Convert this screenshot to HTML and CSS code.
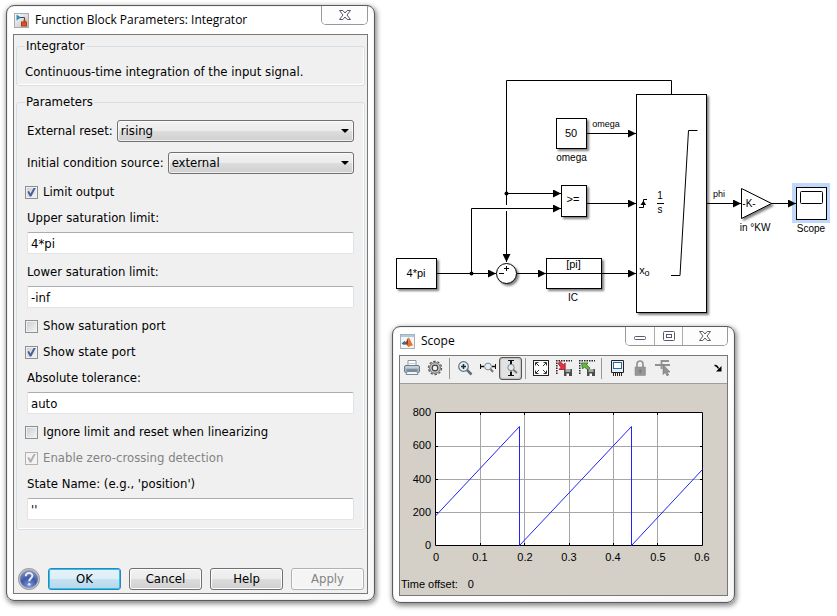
FILE: index.html
```html
<!DOCTYPE html>
<html lang="en">
<head>
<meta charset="utf-8">
<title>Integrator model</title>
<link rel="stylesheet" href="styles.css">
</head>
<body>
<main class="workspace">
  <section class="window dialog">
    <header class="titlebar">
      <svg class="app-icon" viewBox="0 0 15 15"><defs><linearGradient id="ib" x1="0" y1="0" x2="1" y2="1"><stop offset="0" stop-color="#fff"/><stop offset="1" stop-color="#b9bcc0"/></linearGradient></defs><rect x=".5" y=".5" width="14" height="14" fill="url(#ib)" stroke="#a9abae"/><path d="M2.500 1.500v6l4.500-3z" fill="#2f8fb8"/><path d="M6 4.500h4.500v4.500" fill="none" stroke="#444"/><path d="M10.500 6.500v3" stroke="#d0401c" stroke-width="2"/><rect x="7.500" y="9" width="5" height="4" fill="#d4552b" stroke="#b23a17"/></svg>
      <h1 class="title">Function Block Parameters: Integrator</h1>
      <div class="caption-buttons">
        <button type="button" class="caption close" aria-label="Close"><svg viewBox="0 0 12 10" width="12" height="10"><path d="M.5 .5h3.300L6 3l2.200-2.500h3.300L8 5l3.500 4.500H8.200L6 7 3.800 9.500H.5L4 5z" fill="#fff" stroke="#555a68"/></svg></button>
      </div>
    </header>
    <form class="client form">
      <fieldset class="group">
        <legend>Integrator</legend>
        <p class="text">Continuous-time integration of the input signal.</p>
      </fieldset>
      <fieldset class="group params">
        <legend>Parameters</legend>
        <div class="row">
          <label for="reset">External reset:</label>
          <span class="combo"><select id="reset"><option>rising</option></select></span>
        </div>
        <div class="row">
          <label for="source">Initial condition source:</label>
          <span class="combo"><select id="source"><option>external</option></select></span>
        </div>
        <label class="check"><input type="checkbox" checked>Limit output</label>
        <div class="field"><label for="upper">Upper saturation limit:</label><input class="edit" id="upper" type="text" value="4*pi"></div>
        <div class="field"><label for="lower">Lower saturation limit:</label><input class="edit" id="lower" type="text" value="-inf"></div>
        <label class="check"><input type="checkbox">Show saturation port</label>
        <label class="check"><input type="checkbox" checked>Show state port</label>
        <div class="field"><label for="tol">Absolute tolerance:</label><input class="edit" id="tol" type="text" value="auto"></div>
        <label class="check"><input type="checkbox">Ignore limit and reset when linearizing</label>
        <label class="check off"><input type="checkbox" checked disabled>Enable zero-crossing detection</label>
        <div class="field"><label for="state">State Name: (e.g., 'position')</label><input class="edit" id="state" type="text" value="''"></div>
      </fieldset>
      <footer class="actions">
        <svg class="help" viewBox="0 0 22 22"><defs><radialGradient id="hb" cx=".5" cy=".85" r=".8"><stop offset="0" stop-color="#7f9be0"/><stop offset=".5" stop-color="#4059a8"/><stop offset="1" stop-color="#8b9ac6"/></radialGradient></defs><circle cx="11" cy="11" r="10" fill="url(#hb)" stroke="#c4c4c4" stroke-width="2"/><circle cx="11" cy="11" r="10.500" fill="none" stroke="#8d8d8d" stroke-width=".7"/><path d="M7.800 8.300c0-4.300 6.600-4.200 6.600-.5 0 2.400-3.200 2.600-3.200 5.500" fill="none" stroke="#e6eaf6" stroke-width="2"/><circle cx="11.200" cy="16.300" r="1.300" fill="#e6eaf6"/></svg>
        <button type="button" class="btn default">OK</button>
        <button type="button" class="btn">Cancel</button>
        <button type="button" class="btn">Help</button>
        <button type="button" class="btn" disabled>Apply</button>
      </footer>
    </form>
  </section>

  <div class="side">
    <svg class="diagram" viewBox="392 5 445 321" role="img" aria-label="Block diagram">
      <defs>
        <filter id="sh" x="-20%" y="-20%" width="150%" height="150%"><feDropShadow dx="2" dy="2" stdDeviation="1.200" flood-opacity=".5"/></filter>
        <marker id="ar" viewBox="0 0 8 8" refX="8" refY="4" markerWidth="8" markerHeight="8" markerUnits="userSpaceOnUse" orient="auto"><path d="M0 0L8 4 0 8z"/></marker>
      </defs>
      <g class="wire">
        <path d="M671.500 95V80.500H506.500V205M506.500 211V262" marker-end="url(#ar)"/>
        <path d="M506.500 193.500H561" marker-end="url(#ar)"/>
        <path d="M437 273.500H496" marker-end="url(#ar)"/>
        <path d="M471.500 273.500V208.500H561" marker-end="url(#ar)"/>
        <path d="M517 273.500H546" marker-end="url(#ar)"/>
        <path d="M602 273.500H636" marker-end="url(#ar)"/>
        <path d="M587 203.500H636" marker-end="url(#ar)"/>
        <path d="M587 133.500H636" marker-end="url(#ar)"/>
        <path d="M707 203.500H741" marker-end="url(#ar)"/>
      </g>
      <circle cx="506.500" cy="193.500" r="2"/><circle cx="471.500" cy="273.500" r="2"/>
      <rect x="792" y="183" width="38" height="40" fill="#c0d9fb"/>
      <g class="block">
        <rect x="556.500" y="118.500" width="30" height="30"/>
        <rect x="561.500" y="185.500" width="25" height="31"/>
        <rect x="396.500" y="258.500" width="40" height="30"/>
        <rect x="546.500" y="258.500" width="55" height="30"/>
        <circle cx="506.500" cy="273.500" r="10"/>
        <rect x="636.500" y="94.500" width="70" height="218"/>
        <path d="M741.500 188.500V218.500L771.500 203.500z"/>
        <rect x="796.500" y="187.500" width="30" height="32" class="flat"/>
      </g>
      <path d="M771 203.500h25" class="line" marker-end="url(#ar)"/>
      <rect x="800.500" y="191.500" width="22" height="12" rx="1" class="line"/>
      <path class="line" d="M546.500 273.500h55M499 273.500h5M504 268.500h5M506.500 266v5M671 275.500h9L688.500 130.500h9M657 203.500h7M639 207.500h4.500v-8h3.500"/>
      <path d="M640.500 205l3-4.500 2.500 4.500z"/>
      <g class="inside">
        <text x="571" y="137">50</text><text x="573" y="203">&gt;=</text><text x="416" y="277">4*pi</text><text x="573.500" y="268">[pi]</text><text x="642" y="274">x</text>
      </g>
      <g class="name">
        <text x="660" y="199">1</text><text x="660" y="213">s</text><text x="749" y="207">-K-</text>
        <text x="571.500" y="161">omega</text><text x="573" y="301">IC</text><text x="755" y="231">in °KW</text><text x="811" y="232">Scope</text>
      </g>
      <g class="signal"><text x="606" y="127">omega</text><text x="719" y="197">phi</text><text x="647" y="276">o</text></g>
    </svg>

    <section class="window scope">
      <header class="titlebar">
        <svg class="app-icon" viewBox="0 0 15 15"><rect x=".5" y=".5" width="14" height="14" fill="#f5f5f5" stroke="#a8b0b8"/><path d="M1 1h13v2H1z" fill="#a9cbe4"/><path d="M1.500 9.500L4.500 7l2 1.500L4 11z" fill="#2d70a6"/><path d="M4 11c2-1 3-6.500 4.500-7.500L8 12c-1-1.500-2-2-4-1z" fill="#8d3a20"/><path d="M8.500 3.500C10 4 11 9 13.500 11.500c-3-.5-3.500 1-5.500 1.500-1-2 .5-6 .5-9.500z" fill="#e8742a"/></svg>
        <h2 class="title">Scope</h2>
        <div class="caption-buttons">
          <button type="button" class="caption" aria-label="Minimize"><svg viewBox="0 0 12 10" width="12" height="10"><rect x=".5" y="5.500" width="11" height="3" rx="1" fill="#fff" stroke="#555a68"/></svg></button>
          <button type="button" class="caption" aria-label="Maximize"><svg viewBox="0 0 12 10" width="12" height="10"><rect x=".5" y=".5" width="11" height="9" rx="1" fill="#fff" stroke="#555a68"/><rect x="3.500" y="3.500" width="5" height="3" fill="#fff" stroke="#555a68"/></svg></button>
          <button type="button" class="caption close" aria-label="Close"><svg viewBox="0 0 12 10" width="12" height="10"><path d="M.5 .5h3.300L6 3l2.200-2.500h3.300L8 5l3.500 4.500H8.200L6 7 3.800 9.500H.5L4 5z" fill="#fff" stroke="#555a68"/></svg></button>
        </div>
      </header>
      <div class="client">
        <div class="toolbar">
          <button type="button" class="tool" aria-label="Print"><svg viewBox="0 0 16 16"><path d="M4 .5h8V6H4z" fill="#fff" stroke="#8a949c"/><path d="M5 3.500h6" stroke="#ccd"/><rect x=".5" y="5.500" width="15" height="7" rx="1.500" fill="#a9b9c6" stroke="#6a7c8a"/><path d="M1.500 7h13" stroke="#dce5ec"/><path d="M2.500 10h11" stroke="#52616d"/><path d="M3 11.500h10l1 3H2z" fill="#eef5fb" stroke="#7b8a96"/></svg></button>
          <button type="button" class="tool" aria-label="Parameters"><svg viewBox="0 0 16 16"><circle cx="8" cy="8" r="6.600" fill="none" stroke="#555" stroke-width="1.200" stroke-dasharray="2.500 1.650"/><circle cx="8" cy="8" r="5.400" fill="#c9c9c9" stroke="#666"/><circle cx="8" cy="8" r="2.800" fill="#f0f0f0" stroke="#444" stroke-width="1.200"/></svg></button>
          <span class="sep"></span>
          <button type="button" class="tool" aria-label="Zoom"><svg viewBox="0 0 16 16"><path d="M10 10l4.500 4.500" stroke="#666b73" stroke-width="2.500"/><circle cx="6.500" cy="6.500" r="4.800" fill="#e6f1f8" stroke="#66717a" stroke-width="1.200"/><path d="M4 6.500h5M6.500 4v5" stroke="#172d3c" stroke-width="1.500"/></svg></button>
          <button type="button" class="tool" aria-label="Zoom X-axis"><svg viewBox="0 0 16 16"><path d="M.5 4v5M15.500 4v5" stroke="#111"/><path d="M1 6.500h3M12 6.500h3" stroke="#111" stroke-width="1.500"/><path d="M10 8.500l3 3.500" stroke="#777" stroke-width="2"/><circle cx="8" cy="6.500" r="3.400" fill="#e2edf4" stroke="#7d8890"/></svg></button>
          <button type="button" class="tool pressed" aria-label="Zoom Y-axis"><svg viewBox="0 0 16 16"><path d="M5 .5h6M5 15.500h6" stroke="#111"/><path d="M8 1v3.500M8 11.500V15" stroke="#111" stroke-width="2"/><path d="M10 9.500l4 3.500" stroke="#777" stroke-width="2"/><circle cx="8" cy="7.500" r="3.200" fill="#dce9f1" stroke="#7d8890"/></svg></button>
          <span class="sep"></span>
          <button type="button" class="tool" aria-label="Autoscale"><svg viewBox="0 0 16 16"><rect x=".5" y=".5" width="15" height="15" fill="#fff" stroke="#222"/><path d="M2.500 5.500v-3h3M10.500 2.500h3v3M13.500 10.500v3h-3M5.500 13.500h-3v-3M3 3l3 3M13 3l-3 3M13 13l-3-3M3 13l3-3" fill="none" stroke="#333"/></svg></button>
          <button type="button" class="tool" aria-label="Save axes settings"><svg viewBox="0 0 16 16"><path d="M0 .8h16M.8 0v15" stroke="#222" stroke-width="1.500" stroke-dasharray="1.500 1"/><path d="M2 3.500l2-2 3.500 3.300L9.200 3v6.500H3l1.900-2.100z" fill="#e43344" stroke="#a01422" stroke-width=".8"/><path d="M8 9h8v7H8z" fill="#4c4c4c"/><path d="M9.500 9h5v3h-5z" fill="#a8a8a8"/><path d="M10.500 13.500h2.500V16h-2.500z" fill="#fff"/></svg></button>
          <button type="button" class="tool" aria-label="Restore axes settings"><svg viewBox="0 0 16 16"><path d="M0 .8h16M.8 0v15" stroke="#222" stroke-width="1.500" stroke-dasharray="1.500 1"/><path d="M2.500 3H9L7.500 4.700l3.500 3.300-2 2L5.300 7 3.500 9z" fill="#66b843" stroke="#2c681a" stroke-width=".8"/><path d="M8 9h8v7H8z" fill="#4c4c4c"/><path d="M9.500 9h5v3h-5z" fill="#a8a8a8"/><path d="M10.500 13.500h2.500V16h-2.500z" fill="#fff"/></svg></button>
          <span class="sep"></span>
          <button type="button" class="tool" aria-label="Floating scope"><svg viewBox="0 0 16 16"><path d="M2.500 .5h12v12h-12z" fill="#eee" stroke="#222"/><rect x="4.500" y="2.500" width="8" height="6" fill="#fff" stroke="#1672b5"/><path d="M4.500 13v3M6.500 13v3M8.500 13v3M10.500 13v3M12.500 13v3" stroke="#222"/></svg></button>
          <button type="button" class="tool" aria-label="Lock axes selection" disabled><svg viewBox="0 0 16 16"><path d="M5 8V4c0-4 6-4 6 0v4" fill="none" stroke="#949494" stroke-width="1.700"/><rect x="3" y="7" width="10.500" height="8.500" fill="#969696" stroke="#858585" stroke-width=".5"/><path d="M8.200 9.500v4M6.700 11h3" stroke="#777"/></svg></button>
          <button type="button" class="tool" aria-label="Signal selection" disabled><svg viewBox="0 0 16 16"><path d="M0 5h6M7 1h7M7 5h8M6.500 0v9" fill="none" stroke="#929292" stroke-width="1.800"/><path d="M8 4.500v10l2.300-2 1.700 3.500 1.700-1-1.500-3H15z" fill="#939393" stroke="#777" stroke-width=".6"/></svg></button>
          <svg class="dock" viewBox="0 0 8 8"><path d="M.5 1.500c2-.5 3 1 4 3" fill="none" stroke="#000" stroke-width="1.500"/><path d="M7.500 2v5.500H2z"/></svg>
        </div>
        <div class="plot">
          <svg class="chart" viewBox="400 384 327 180" role="img" aria-label="Sawtooth signal between 0 and 720">
            <rect x="435.500" y="412.500" width="267" height="133" class="area"/>
            <path class="grid" d="M480.500 412v134M524.500 412v134M569.500 412v134M613.500 412v134M657.500 412v134M435 446.500h267M435 479.500h267M435 512.500h267"/>
            <path class="axis" d="M435.500 412.500h267v133h-267zM480.500 413v2M524.500 413v2M569.500 413v2M613.500 413v2M657.500 413v2M480.500 545v-2M524.500 545v-2M569.500 545v-2M613.500 545v-2M657.500 545v-2M436 446.500h2M436 479.500h2M436 512.500h2M702 446.500h-2M702 479.500h-2M702 512.500h-2"/>
            <path class="trace" d="M435.500 516L519.500 426.500V545.500L631.500 426.500V545.500L702.500 469.500"/>
            <g class="ylab"><text x="431" y="416">800</text><text x="431" y="449">600</text><text x="431" y="483">400</text><text x="431" y="516">200</text><text x="431" y="549">0</text></g>
            <g class="xlab"><text x="436" y="561">0</text><text x="480" y="561">0.1</text><text x="525" y="561">0.2</text><text x="569" y="561">0.3</text><text x="613" y="561">0.4</text><text x="658" y="561">0.5</text><text x="702" y="561">0.6</text></g>
          </svg>
          <p class="offset"><span>Time offset:</span><span>0</span></p>
        </div>
      </div>
    </section>
  </div>
</main>
</body>
</html>
```
FILE: styles.css
```css
* { box-sizing: border-box; }
body {
  margin: 0;
  min-height: 100vh;
  background: #fff;
  color: #000;
  font: 13px/16px "DejaVu Sans Condensed", "DejaVu Sans", sans-serif;
}
h1, h2, p { margin: 0; }
button, input, select { font: inherit; color: inherit; }

.workspace {
  display: grid;
  grid-template-columns: minmax(0, 369fr) minmax(0, 445fr);
  column-gap: 17px;
  align-items: start;
  padding: 5px 0 12px 6px;
}

.window {
  border: 1px solid #5c5c5c;
  border-radius: 8px;
  background: linear-gradient(135deg, #fff 60%, #f7f7f7);
  box-shadow: inset 0 0 1px #777, 1px 2px 5px 1px rgba(0, 0, 0, .45);
  padding: 0 6px 6px;
}
.titlebar {
  display: flex;
  align-items: center;
  height: 28px;
  padding-left: 1px;
}
.app-icon { width: 15px; height: 15px; }
.title {
  flex: 1;
  margin-left: 6px;
  font: 12px/16px "Open Sans", "Noto Sans", sans-serif;
}
.caption-buttons {
  display: flex;
  align-self: flex-start;
  border: 1px solid #999;
  border-top: 0;
  border-radius: 0 0 5px 5px;
  overflow: hidden;
}
.caption {
  display: grid;
  place-items: center;
  width: 28px;
  height: 18px;
  padding: 0;
  border: 0;
  background: #fdfdfd;
}
.caption + .caption { border-left: 1px solid #aaa; }
.caption.close { width: 45px; }

.client { border: 1px solid #777; }
.form { padding: 3px 2px; background: #f0f0f0; }

.group {
  min-width: 0;
  margin: 0;
  padding: 10px 10px 5px 8px;
  border: 1px solid #d5dfe5;
  border-radius: 3px;
  box-shadow: inset -1px -1px #fff;
}
.group legend { padding: 0 1px; }
.params {
  display: flex;
  flex-direction: column;
  gap: 10px;
  margin-top: 8px;
  padding-bottom: 9px;
}
.row { display: flex; align-items: center; gap: 4px; padding-left: 2px; }
.row label { flex: none; }
.combo { position: relative; flex: 1; display: flex; }
.combo::after {
  content: "";
  position: absolute;
  right: 5px;
  top: 9px;
  border: 4px solid transparent;
  border-top-color: #000;
  border-bottom: 0;
  pointer-events: none;
}
.combo select {
  appearance: none;
  width: 100%;
  height: 22px;
  padding: 0 16px 0 3px;
  border: 1px solid #707070;
  border-radius: 3px;
  background: linear-gradient(#f2f2f2, #ebebeb 50%, #dddddd 50%, #cfcfcf);
  box-shadow: inset 0 0 0 1px rgba(255, 255, 255, .7);
}
.check { display: flex; align-items: center; gap: 5px; }
.check input {
  appearance: none;
  display: grid;
  place-items: center;
  width: 13px;
  height: 13px;
  margin: 0;
  border: 1px solid #8e8f8f;
  background: linear-gradient(135deg, #c8ccd2, #f6f6f6);
  background-clip: content-box;
  padding: 1px;
}
.check input:checked::before {
  content: "";
  width: 9px;
  height: 9px;
  background: #4a5f97;
  clip-path: polygon(4% 48%, 22% 40%, 40% 66%, 76% 0, 100% 0, 48% 100%, 30% 100%);
}
.check.off { color: #838383; }
.check.off input { border-color: #b1b1b1; background: #f3f3f3; }
.check.off input::before { background: #b0b0b0; }
.field { display: flex; flex-direction: column; gap: 6px; padding-left: 2px; }
.edit {
  width: 100%;
  height: 22px;
  padding: 0 3px;
  border: 1px solid #e2e3ea;
  border-top-color: #abadb3;
  border-radius: 2px;
  background: #fff;
}

.actions { display: flex; align-items: center; gap: 8px; margin-top: 38px; padding: 0 1px 0 2px; }
.help { flex: none; width: 22px; height: 22px; }
.btn {
  flex: 1;
  height: 22px;
  padding: 0;
  border: 1px solid #707070;
  border-radius: 3px;
  background: linear-gradient(#f2f2f2, #ebebeb 50%, #dddddd 50%, #cfcfcf);
  box-shadow: inset 0 0 0 1px #fcfcfc;
}
.btn.default {
  border-color: #3c7fb1;
  background: linear-gradient(#e6f2f9, #dceef8 50%, #c6e2f2 50%, #b4d8ec);
  box-shadow: inset 0 0 0 1px #22c5f5;
}
.btn:disabled { border-color: #adb2b5; background: #f4f4f4; color: #838383; }

.diagram {
  display: block;
  width: 100%;
  font-family: "Liberation Sans", Arial, sans-serif;
  text-anchor: middle;
}
.wire path, .line { fill: none; stroke: #000; }
.block > * { fill: #fff; stroke: #000; filter: url(#sh); }
.block > .flat { filter: none; }
.inside { font-size: 11px; }
.name { font-size: 10px; }
.signal { font-size: 9px; }

.scope { max-width: 343px; }
.toolbar {
  display: flex;
  align-items: center;
  height: 28px;
  padding-bottom: 3px;
  border-bottom: 1px solid #9d9d9d;
  background: #f0f0f0;
}
.tool {
  display: grid;
  place-items: center;
  width: 23px;
  height: 23px;
  padding: 0;
  border: 1px solid transparent;
  border-radius: 3px;
  background: none;
}
.tool svg { width: 16px; height: 16px; }
.tool.pressed { border-color: #555; background: #e2e2e2; box-shadow: inset 0 0 2px #777; }
.sep { width: 7px; height: 21px; background: linear-gradient(90deg, transparent 3px, #999 3px, #999 4px, transparent 4px); }
.dock { width: 8px; height: 8px; margin: 0 5px 0 auto; }
.plot {
  padding-bottom: 3px;
  background: #d4d0c8;
  font: 11px/16px "Liberation Sans", Arial, sans-serif;
}
.chart { display: block; width: 100%; }
.chart path { fill: none; }
.area { fill: #fff; }
.grid { stroke: #a6a6a6; }
.axis { stroke: #000; }
.trace { stroke: #22f; }
.ylab { text-anchor: end; }
.xlab { text-anchor: middle; }
.offset { display: flex; gap: 10px; margin-top: 12px; padding-left: 1px; }
```
